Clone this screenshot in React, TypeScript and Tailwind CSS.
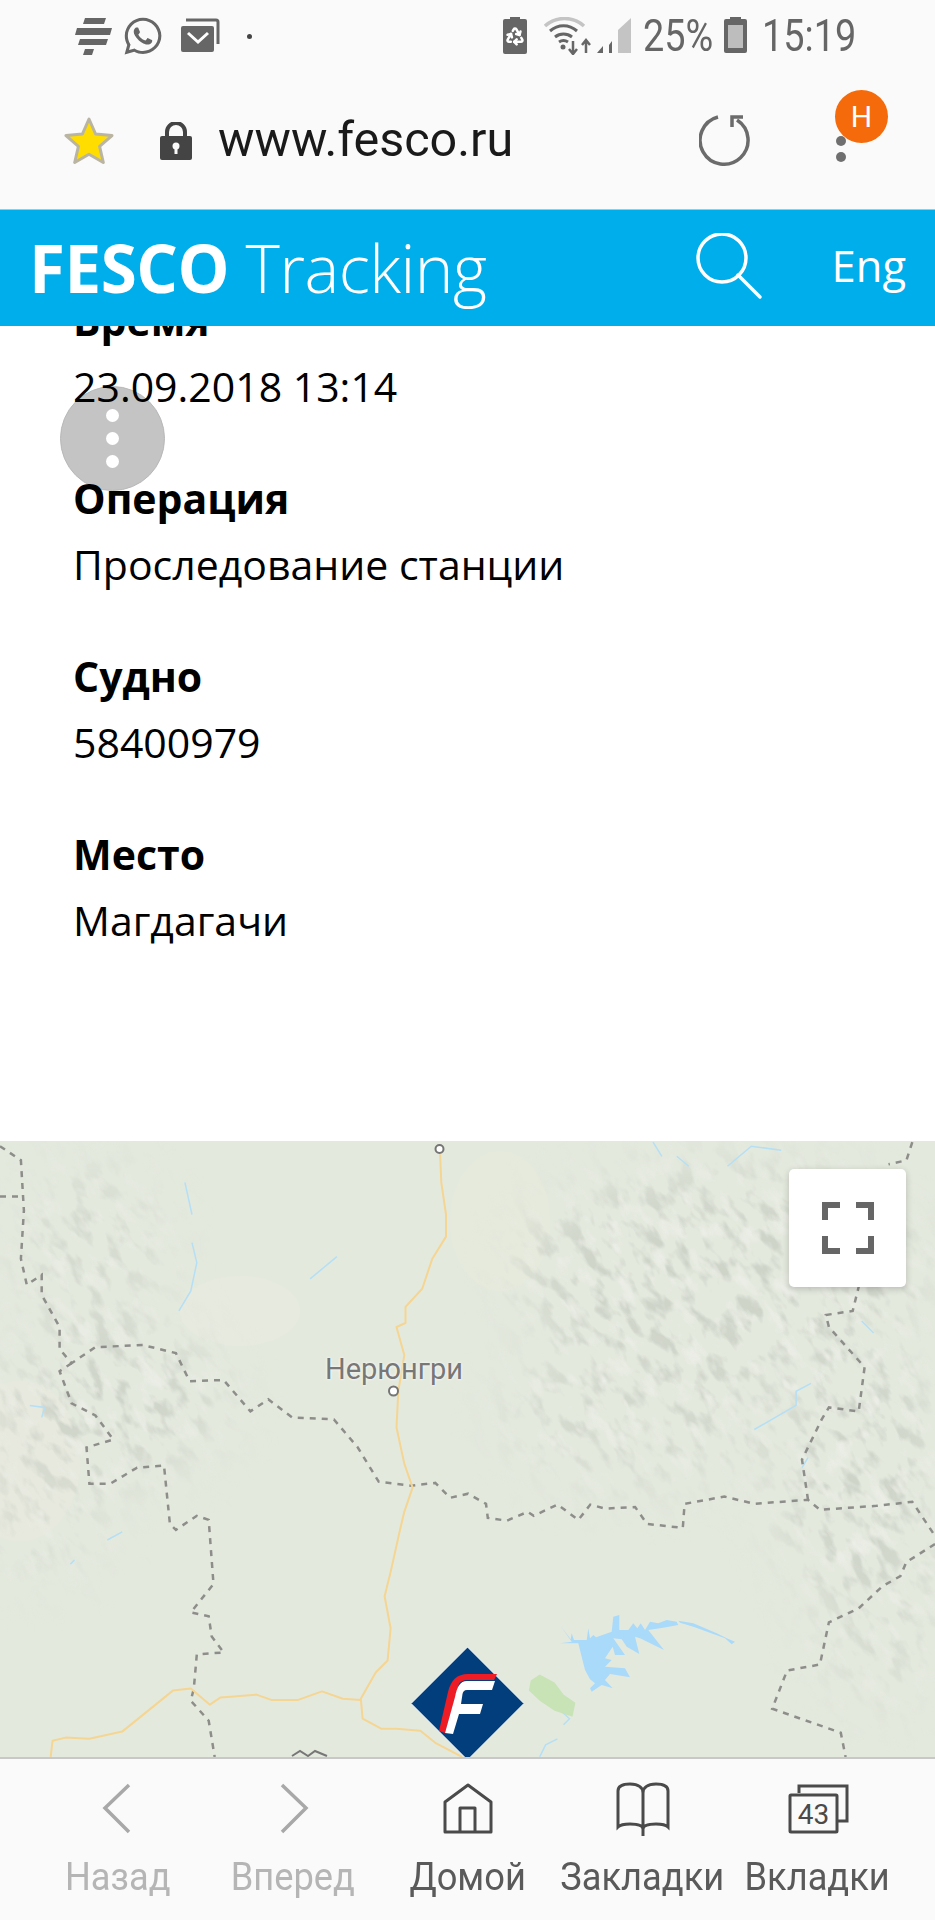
import React from 'react';
import { Recycle } from 'lucide-react';
import { FaWhatsapp } from 'react-icons/fa';

type Pt = [number, number];

// traced from the map crop: 1.677 px wide and 2.489 px tall per real pixel
const toPath = (pts: Pt[], close = false) =>
  'M' + pts.map(([x, y]) => `${(x / 1.677).toFixed(1)} ${(y / 2.489 - 10.85).toFixed(1)}`).join(' L') + (close ? ' Z' : '');

// the lake comes from a tighter crop, 3 px per real pixel both ways
const toLakePath = (pts: Pt[]) =>
  'M' + pts.map(([x, y]) => `${(x / 3 + 550).toFixed(1)} ${(y / 3 + 459).toFixed(1)}`).join(' L') + ' Z';

const roads: Pt[][] = [
  [[738, 60], [740, 130], [748, 210], [748, 265], [725, 320], [708, 395], [680, 440], [680, 480], [665, 490], [678, 560], [668, 650], [665, 740], [678, 830], [692, 890], [678, 950], [670, 1000], [655, 1100], [645, 1160], [655, 1240], [650, 1320], [630, 1350], [605, 1415], [608, 1465], [640, 1490], [665, 1490], [705, 1495], [730, 1525], [775, 1560]],
  [[85, 1560], [88, 1520], [110, 1512], [150, 1515], [205, 1497], [290, 1395], [320, 1390], [352, 1430], [370, 1412], [430, 1405], [455, 1418], [500, 1418], [540, 1397], [575, 1415], [605, 1418]],
];

const borders: Pt[][] = [
  [[0, 40], [35, 75], [40, 200], [35, 320], [45, 385], [70, 360], [70, 410], [100, 490], [100, 545], [120, 580], [160, 540], [240, 535], [295, 555], [318, 625], [375, 622], [420, 700], [450, 670], [490, 715], [560, 720], [600, 790], [635, 875], [690, 885], [730, 878], [755, 915], [785, 905], [815, 930], [818, 965], [850, 972], [885, 950], [895, 960], [935, 932], [970, 970], [990, 932], [1015, 942], [1065, 938], [1085, 980], [1145, 990], [1148, 930], [1215, 912], [1265, 930], [1355, 920], [1375, 945], [1470, 935], [1530, 925], [1568, 1010]],
  [[120, 580], [100, 600], [120, 680], [160, 710], [190, 770], [145, 790], [150, 880], [185, 880], [230, 840], [275, 835], [285, 980], [295, 995], [330, 960], [350, 970], [358, 1130], [320, 1200], [350, 1210], [355, 1260], [375, 1300], [330, 1305], [325, 1390], [320, 1420], [350, 1470], [360, 1560]],
  [[1355, 920], [1345, 820], [1378, 720], [1390, 690], [1440, 700], [1450, 590], [1390, 490], [1385, 460], [1430, 450], [1440, 390]],
  [[1568, 1030], [1520, 1075], [1510, 1110], [1480, 1135], [1440, 1190], [1390, 1225], [1375, 1330], [1320, 1345], [1295, 1440], [1410, 1500], [1418, 1560]],
  [[1530, 30], [1520, 75], [1490, 85]],
  [[0, 165], [35, 165]],
];

const rivers: Pt[][] = [
  [[310, 130], [322, 210]],
  [[322, 280], [330, 330], [320, 400], [300, 450]],
  [[520, 370], [565, 315]],
  [[1095, 30], [1110, 65]],
  [[1135, 65], [1155, 90]],
  [[1220, 90], [1260, 40], [1310, 50]],
  [[1265, 745], [1335, 685], [1335, 650], [1360, 630]],
  [[1345, 840], [1355, 815]],
  [[1445, 475], [1465, 505]],
  [[905, 1560], [915, 1530], [935, 1515]],
  [[945, 1480], [955, 1465], [930, 1430]],
  [[180, 1020], [205, 1000]],
  [[125, 1070], [118, 1080]],
  [[50, 685], [75, 690], [70, 715]],
];

const lake: Pt[] = [[30, 75], [62, 118], [65, 100], [72, 120], [110, 120], [115, 85], [120, 115], [130, 105], [138, 112], [185, 95], [190, 50], [208, 45], [208, 90], [235, 90], [250, 70], [262, 85], [272, 70], [285, 90], [300, 65], [325, 70], [350, 60], [380, 65], [385, 75], [340, 83], [295, 90], [342, 150], [270, 115], [255, 110], [268, 162], [230, 140], [215, 118], [190, 115], [225, 165], [195, 165], [188, 140], [165, 175], [185, 180], [165, 200], [225, 205], [240, 232], [180, 222], [165, 240], [188, 265], [155, 255], [125, 275], [120, 265], [135, 250], [120, 238], [105, 210], [85, 130], [30, 130], [65, 125]];
const lakeStream: Pt[] = [[385, 62], [430, 70], [500, 100], [530, 115], [555, 125], [545, 133], [525, 115], [430, 80], [390, 68]];
const park: Pt[] = [[890, 1370], [905, 1355], [930, 1375], [945, 1405], [965, 1425], [960, 1460], [930, 1445], [905, 1420], [887, 1395]];

const statusText = "font-['Roboto',sans-serif] text-[44px] leading-none text-[#666] scale-x-[0.86]";

const StatusBar = () => (
  <div className="h-[66px] shrink-0 bg-[#fafafa] flex items-center pl-[75px] pr-[82px] pt-[6px]">
    <svg width="37" height="37" viewBox="0 0 37 37" fill="#666">
      <path d="M10 0h21l-2 6H8zM2 10h35l-2 7H0zM5 21h28l-2 6H3zM10 31h9l-2 6H8z" />
    </svg>
    <FaWhatsapp className="ml-[10px] text-[#666]" size={42} />
    <svg className="ml-[16px]" width="40" height="36" viewBox="0 0 40 36" fill="none">
      <path d="M6 2h30a2 2 0 0 1 2 2v22" stroke="#666" strokeWidth="3" />
      <rect x="1" y="8" width="33" height="26" rx="2" fill="#666" />
      <path d="M8 15l10 9 10-9" stroke="#fff" strokeWidth="3" />
    </svg>
    <div className="ml-[27px] w-[5px] h-[5px] rounded-full bg-[#444]" />

    <div className="ml-auto flex items-center">
      <div className="relative w-[24px] h-[35px] bg-[#666] rounded-[2px] flex items-center justify-center">
        <div className="absolute -top-[2px] left-[7px] w-[10px] h-[3px] bg-[#666]" />
        <Recycle size={20} color="#fff" strokeWidth={3} />
      </div>
      <svg className="ml-[17px]" width="90" height="38" viewBox="0 0 90 38" fill="none">
        <path d="M1 9C12-1 29-1 40 9" stroke="#c4c4c4" strokeWidth="3.5" />
        <path d="M6 14c8-7 19-7 27 0M11 20c5-4 12-4 17 0M15 25c3-2 6-2 9 0" stroke="#666" strokeWidth="3" />
        <circle cx="19" cy="30" r="2.5" fill="#666" />
        <path d="M29 24v12M25 32l4 5 4-5M42 36V24M38 28l4-5 4 5" stroke="#666" strokeWidth="2.5" />
        <path d="M53 36l6-7v7z" fill="#666" />
        <path d="M65 36V28l3-4v12z" fill="#666" />
        <path d="M74 36V13L87 1v35z" fill="#c4c4c4" />
      </svg>
      <span className={`${statusText} ml-[9px] w-[76px] origin-left`}>25%</span>
      <div className="relative ml-[5px] w-[23px] h-[34px] bg-[#666] rounded-[2px] flex items-center justify-center">
        <div className="absolute -top-[2px] left-[6px] w-[11px] h-[3px] bg-[#666]" />
        <div className="w-[15px] h-[23px] bg-[#bdbdbd]" />
      </div>
      <span className={`${statusText} ml-[15px] w-[91px] origin-left`}>15:19</span>
    </div>
  </div>
);

const AddressBar = () => (
  <div className="h-[143px] shrink-0 bg-[#fafafa] flex items-center pl-[64px] pt-[6px] relative">
    <svg width="50" height="50" viewBox="0 0 50 50">
      <path d="M25 3l6.6 15 16.4 1.6-12.4 10.8 3.7 16.1L25 38.2 10.700 46.500l3.700-16.100L2 19.600 18.400 18z" fill="#ffdd00" stroke="#b9b5a2" strokeWidth="3" strokeLinejoin="round" />
    </svg>
    <svg className="ml-[46px]" width="32" height="38" viewBox="0 0 32 38">
      <path d="M7 15V10a9 9 0 0 1 18 0v5" fill="none" stroke="#444" strokeWidth="4" />
      <rect y="14" width="32" height="24" rx="2" fill="#444" />
      <circle cx="16" cy="24" r="3.500" fill="#fafafa" />
      <rect x="14.500" y="25" width="3" height="7" fill="#fafafa" />
    </svg>
    <span className="ml-[26px] font-['Roboto',sans-serif] text-[48.500px] leading-none text-[#1a1a1a]">www.fesco.ru</span>
    <svg className="absolute left-[699px] top-[49px]" width="52" height="52" viewBox="0 0 52 52" fill="none">
      <path d="M38 5A24 24 0 1 1 19 2" stroke="#6b6b6b" strokeWidth="3.500" />
      <path d="M33 12V2h11" stroke="#6b6b6b" strokeWidth="3.500" />
    </svg>
    <div className="absolute left-[836px] top-[70px] flex flex-col gap-[6px]">
      <div className="w-[10px] h-[10px] rounded-full bg-[#6f6f6f]" />
      <div className="w-[10px] h-[10px] rounded-full bg-[#6f6f6f]" />
    </div>
    <div className="absolute left-[835px] top-[24px] w-[53px] h-[53px] rounded-full bg-[#f56a0a] flex items-center justify-center font-['Roboto',sans-serif] text-[30px] text-white">
      H
    </div>
  </div>
);

const SiteHeader = () => (
  <div className="h-[117px] shrink-0 bg-[#00aeec] border-t border-[#7fd3f3] flex items-center pl-[29px] relative z-20 font-['Open_Sans',sans-serif] text-white">
    <span className="text-[65.500px] leading-none tracking-[-0.5px]">
      <span className="font-bold">FESCO</span> <span className="font-light">Tracking</span>
    </span>
    <svg className="ml-auto" width="70" height="70" viewBox="0 0 70 70" fill="none">
      <circle cx="29" cy="25" r="24" stroke="#fff" strokeWidth="3.500" />
      <path d="M45 42l22 22" stroke="#fff" strokeWidth="3.500" strokeLinecap="round" />
    </svg>
    <span className="ml-[69px] mr-[29px] mb-[4px] text-[43.500px] leading-none">Eng</span>
  </div>
);

const Field = ({ label, value }: { label: string; value: string }) => (
  <div className="mb-[46px]">
    <div className="h-[68px] flex items-center font-bold">{label}</div>
    <div className="h-[64px] flex items-center">{value}</div>
  </div>
);

const Details = () => (
  <div className="h-[815px] shrink-0 relative overflow-hidden bg-white">
    <div className="absolute left-[60px] top-[60px] w-[105px] h-[105px] rounded-full bg-[#c4c4c4] border border-[#b8b8b8] flex flex-col items-center justify-center gap-[10px]">
      <div className="w-[13px] h-[13px] rounded-full bg-white" />
      <div className="w-[13px] h-[13px] rounded-full bg-white" />
      <div className="w-[13px] h-[13px] rounded-full bg-white" />
    </div>
    <div className="relative z-10 -mt-[40px] pl-[73px] font-['Open_Sans',sans-serif] text-[41px] leading-none text-black">
      <Field label="Время" value="23.09.2018 13:14" />
      <Field label="Операция" value="Проследование станции" />
      <Field label="Судно" value="58400979" />
      <Field label="Место" value="Магдагачи" />
    </div>
  </div>
);

const MapPanel = () => (
  <div className="h-[616px] shrink-0 relative overflow-hidden bg-[#e4e9de]">
    <svg className="block" width="935" height="616" viewBox="0 0 935 616" fill="none">
      <defs>
        <filter id="shade" x="0" y="0" width="100%" height="100%" colorInterpolationFilters="sRGB">
          <feTurbulence type="fractalNoise" baseFrequency="0.07 0.035" numOctaves="3" seed="7" />
          <feColorMatrix type="matrix" values="0 0 0 0 0.81  0 0 0 0 0.83  0 0 0 0 0.79  5 0 0 0 -2.5" />
        </filter>
        <filter id="glint" x="0" y="0" width="100%" height="100%" colorInterpolationFilters="sRGB">
          <feTurbulence type="fractalNoise" baseFrequency="0.07 0.035" numOctaves="3" seed="23" />
          <feColorMatrix type="matrix" values="0 0 0 0 0.92  0 0 0 0 0.93  0 0 0 0 0.9  4 0 0 0 -2.2" />
        </filter>
        <filter id="soft">
          <feGaussianBlur stdDeviation="28" />
        </filter>
        <mask id="ranges" maskUnits="userSpaceOnUse" x="0" y="0" width="935" height="616">
          <g filter="url(#soft)" fill="#fff">
            <ellipse cx="720" cy="130" rx="200" ry="100" />
            <ellipse cx="640" cy="270" rx="130" ry="70" opacity="0.8" />
            <ellipse cx="860" cy="330" rx="80" ry="130" />
            <ellipse cx="880" cy="480" rx="60" ry="80" opacity="0.6" />
            <ellipse cx="90" cy="110" rx="70" ry="80" opacity="0.7" />
            <ellipse cx="110" cy="260" rx="110" ry="70" />
            <ellipse cx="40" cy="360" rx="60" ry="70" opacity="0.6" />
          </g>
        </mask>
      </defs>
      <ellipse cx="500" cy="80" rx="50" ry="70" fill="#e6eadd" />
      <ellipse cx="240" cy="170" rx="60" ry="35" fill="#e7eadf" />
      <ellipse cx="20" cy="320" rx="60" ry="80" fill="#e7e9de" />
      <g mask="url(#ranges)">
        <rect x="-300" y="-300" width="1540" height="1220" fill="#000" transform="rotate(-35 467 308)" filter="url(#shade)" />
        <rect x="-300" y="-300" width="1540" height="1220" fill="#000" transform="rotate(-35 467 308)" filter="url(#glint)" />
      </g>
      {rivers.map((r, i) => (
        <path key={i} d={toPath(r)} stroke="#b5dff5" strokeWidth="1.500" />
      ))}
      <path d={toLakePath(lake)} fill="#aadafa" />
      <path d={toLakePath(lakeStream)} fill="#aadafa" />
      <path d={toPath(park, true)} fill="#c8e3b6" />
      {borders.map((b, i) => (
        <path key={i} d={toPath(b)} stroke="#8d8d89" strokeWidth="2.500" strokeDasharray="6 6" />
      ))}
      {roads.map((r, i) => (
        <path key={i} d={toPath(r)} stroke="#f5d592" strokeWidth="2" strokeLinejoin="round" />
      ))}
      <circle cx="439.500" cy="8" r="4" fill="#fff" stroke="#757575" strokeWidth="2" />
      <circle cx="393.500" cy="250" r="4.500" fill="#fff" stroke="#757575" strokeWidth="2" />
      <path d="M292 615l8-5 8 5 7-5 12 5" stroke="#777" strokeWidth="2" />
    </svg>

    <span className="absolute left-[325px] top-[211px] font-['Roboto',sans-serif] text-[29px] leading-[34px] text-[#777] [text-shadow:0_0_3px_#fff]">
      Нерюнгри
    </span>

    <svg className="absolute left-[411px] top-[506px]" width="113" height="113" viewBox="0 0 113 113">
      <path d="M56.500 0L113 56.500 56.500 113 0 56.500z" fill="#033e7c" stroke="#fff" strokeWidth="1" />
      <path d="M28 84l9-39c3-12 9-18 20-18h29l-3 6H56c-5 0-8 2-9 7L34 86z" fill="#ee1c25" />
      <path d="M34 86l10-36c2-10 5-16 12-16h28l-3 9H56c-3 0-4 2-4.500 4L50 57h22l-3 10H48l-6 20z" fill="#fff" />
    </svg>

    <div className="absolute right-[29px] top-[28px] w-[117px] h-[118px] bg-white rounded-[5px] shadow-[0_2px_7px_rgba(0,0,0,0.2)] flex items-center justify-center">
      <svg width="52" height="52" viewBox="0 0 52 52" fill="none" stroke="#666" strokeWidth="6">
        <path d="M3 18V3h15M34 3h15v15M49 34v15H34M18 49H3V34" />
      </svg>
    </div>
  </div>
);

const navItems = [
  {
    label: 'Назад',
    muted: true,
    icon: <path d="M37 2L13 25l24 24" stroke="#a8a8a8" strokeWidth="3.500" />,
  },
  {
    label: 'Вперед',
    muted: true,
    icon: <path d="M15 2l24 23-24 24" stroke="#a8a8a8" strokeWidth="3.500" />,
  },
  {
    label: 'Домой',
    muted: false,
    icon: <path d="M3 49V19L26 2l23 17v30zM18 49V25h15v24" stroke="#4a4a4a" strokeWidth="3" strokeLinejoin="round" />,
  },
  {
    label: 'Закладки',
    muted: false,
    icon: (
      <path d="M26 10C26 5 22 1 13 1 6 1 1 3 1 8v36c3-3 8-3 12-3 7 0 13 1 13 5V10c0-5 4-9 13-9 7 0 12 2 12 7v36c-3-3-8-3-12-3-7 0-13 1-13 5v7" stroke="#4a4a4a" strokeWidth="3" />
    ),
  },
  {
    label: 'Вкладки',
    muted: false,
    icon: (
      <>
        <path d="M7 10V3h48v35h-9" stroke="#4a4a4a" strokeWidth="3" />
        <rect x="-2" y="12" width="47" height="37" rx="1" stroke="#4a4a4a" strokeWidth="3" />
        <text x="21.500" y="40.500" textAnchor="middle" fontFamily="Roboto, sans-serif" fontSize="28" fill="#4a4a4a">43</text>
      </>
    ),
  },
];

const BottomNav = () => (
  <div className="flex-1 bg-[#fafafa] border-t-2 border-[#c8c8c8] grid grid-cols-5 px-[30px] relative z-10">
    {navItems.map(item => (
      <div key={item.label} className="flex flex-col items-center pt-[24px]">
        <svg width="60" height="52" viewBox="-4 0 60 52" fill="none" className="overflow-visible">
          {item.icon}
        </svg>
        <span className={`mt-[23px] whitespace-nowrap font-['Roboto',sans-serif] text-[39px] leading-none scale-x-[0.93] ${item.muted ? 'text-[#b5b5b5]' : 'text-[#5a5a5a]'}`}>
          {item.label}
        </span>
      </div>
    ))}
  </div>
);

export default function App() {
  return (
    <div className="w-[935px] h-[1920px] overflow-hidden flex flex-col bg-white">
      <StatusBar />
      <AddressBar />
      <SiteHeader />
      <Details />
      <MapPanel />
      <BottomNav />
    </div>
  );
}
